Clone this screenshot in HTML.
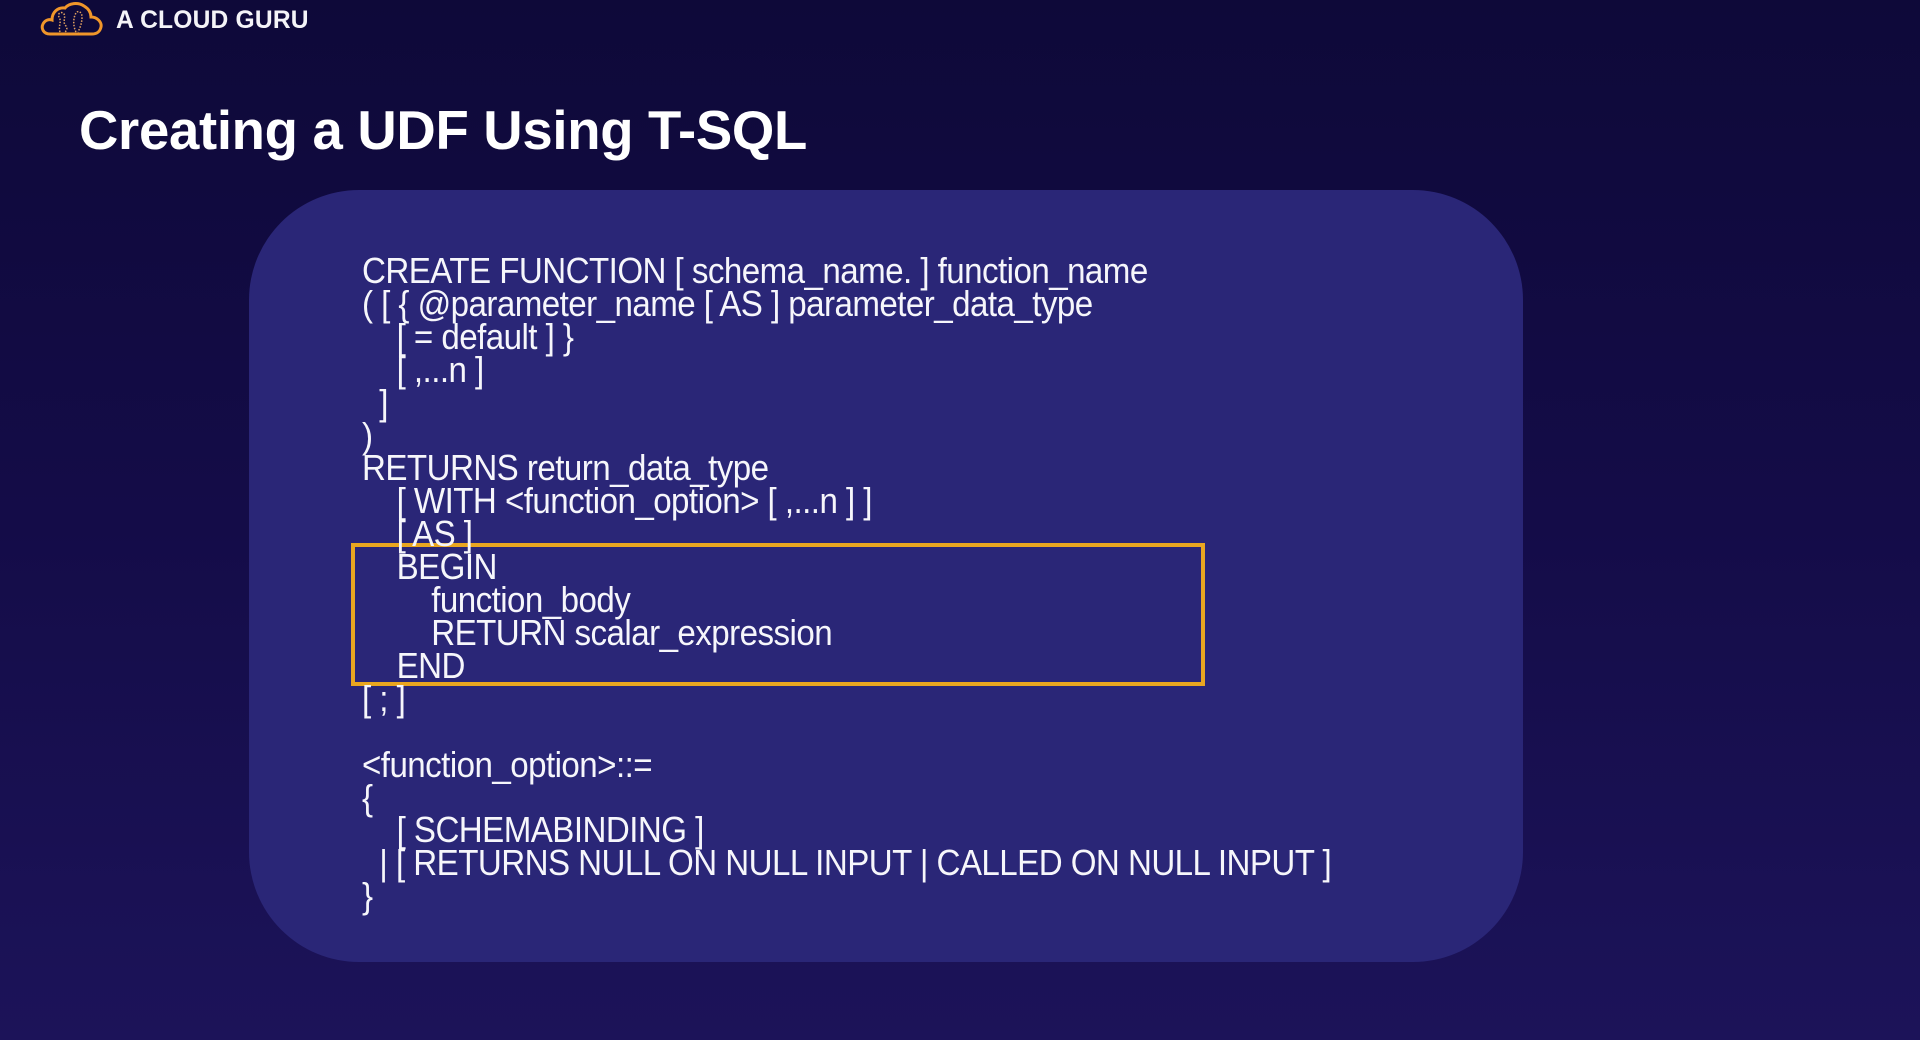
<!DOCTYPE html>
<html><head><meta charset="utf-8"><style>
html,body{margin:0;padding:0}
body{width:1920px;height:1040px;overflow:hidden;position:relative;background:linear-gradient(180deg,#0e0939 0%,#140c48 50%,#1c1359 100%);font-family:"Liberation Sans",sans-serif;color:#fff}
.logo{position:absolute;left:40px;top:2px}
.brand{position:absolute;left:116px;top:7px;font-size:24.6px;font-weight:bold;letter-spacing:0.2px;color:#f4f4f8}
h1{position:absolute;left:79px;top:99px;margin:0;font-size:54.5px;font-weight:bold;letter-spacing:-0.3px;color:#fff}
.panel{position:absolute;left:249px;top:190px;width:1274px;height:772px;border-radius:110px;background:#2a2677}
.code{position:absolute;left:362px;top:255px;font-size:36px;line-height:32.9px;white-space:pre;transform:scaleX(0.92);transform-origin:0 0;letter-spacing:-0.6px;color:#f6f6fb}
.box{position:absolute;left:351px;top:543px;width:846px;height:135px;border:4px solid #e9a620}
</style></head><body>
<svg class="logo" width="64" height="34" viewBox="0 0 64 34">
<path d="M10 32 C3 32 1 26 3 22 C5 18 9 17 12 18 C12 10 18 5 25 6 C29 1 38 0 44 4 C49 7 51 11 51 15 C57 15 62 20 61 25 C60 30 56 32 52 32 Z" fill="none" stroke="#f0962a" stroke-width="3"/>
<path d="M20 30 C18 24 22 20 19 15 C17 11 22 9 24 12 C26 16 22 20 26 24 C28 27 26 30 24 30" fill="none" stroke="#e0a060" stroke-width="1.5" stroke-dasharray="1.5 1.5"/>
<path d="M36 30 C33 24 33 16 36 11 C38 8 42 10 42 15 C42 21 40 26 38 30" fill="none" stroke="#e0a060" stroke-width="1.5" stroke-dasharray="1.5 1.5"/>
</svg>
<div class="brand">A CLOUD GURU</div>
<h1>Creating a UDF Using T-SQL</h1>
<div class="panel"></div>
<div class="box"></div>
<div class="code">CREATE FUNCTION [ schema_name. ] function_name
( [ { @parameter_name [ AS ] parameter_data_type
    [ = default ] }
    [ ,...n ]
  ]
)
RETURNS return_data_type
    [ WITH &lt;function_option&gt; [ ,...n ] ]
    [ AS ]
    BEGIN
        function_body
        RETURN scalar_expression
    END
[ ; ]

&lt;function_option&gt;::=
{
    [ SCHEMABINDING ]
  | [ RETURNS NULL ON NULL INPUT | CALLED ON NULL INPUT ]
}</div>
</body></html>
